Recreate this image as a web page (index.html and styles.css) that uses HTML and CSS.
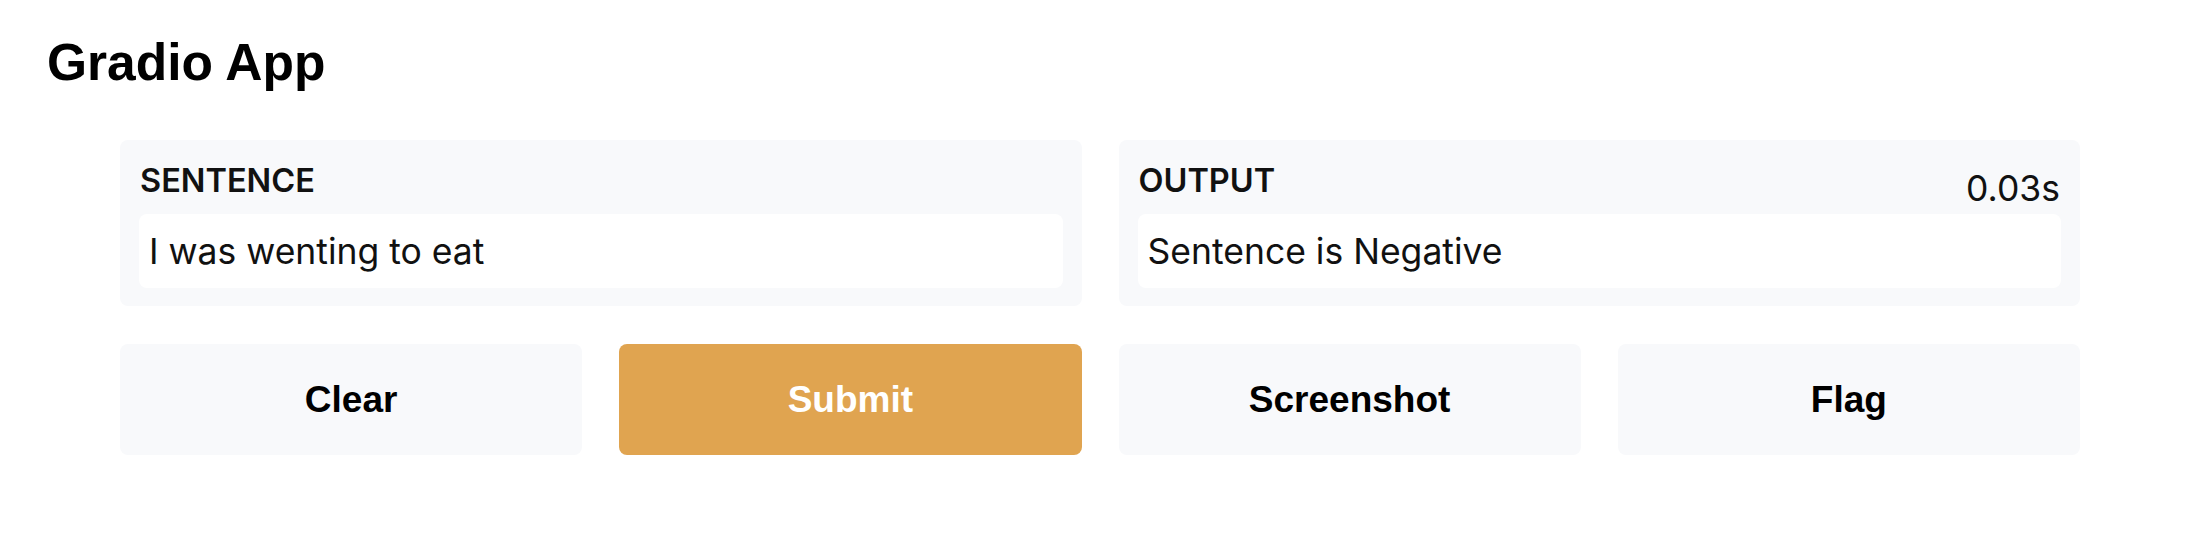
FILE: index.html
```html
<!DOCTYPE html>
<html lang="en">
<head>
<meta charset="utf-8">
<title>Gradio App</title>
<link rel="stylesheet" href="styles.css">
</head>
<body>
<h1 class="title">Gradio App</h1>
<main class="app">
  <section class="panel">
    <div class="label">SENTENCE</div>
    <div class="field">I was wenting to eat</div>
  </section>
  <section class="panel panel-output">
    <div class="label">OUTPUT</div>
    <div class="timer">0.03s</div>
    <div class="field">Sentence is Negative</div>
  </section>
  <button class="btn">Clear</button>
  <button class="btn btn-primary">Submit</button>
  <button class="btn">Screenshot</button>
  <button class="btn">Flag</button>
</main>
</body>
</html>
```

FILE: styles.css
```css
html, body {
  margin: 0;
  padding: 0;
  background: #ffffff;
}

body {
  padding: 32px 0 0 0;
  color: #000;
}

.title {
  margin: 0 0 0 47px;
  font-family: "Liberation Sans", Arial, sans-serif;
  font-weight: 700;
  font-size: 51.5px;
  line-height: 61px;
  color: #000;
}

.app {
  margin: 47px 0 0 120px;
  width: 1960px;
  display: grid;
  grid-template-columns: repeat(4, 1fr);
  grid-template-rows: 166px 111px;
  column-gap: 37px;
  row-gap: 38px;
}

.panel {
  grid-column: span 2;
  position: relative;
  background: #f8f9fb;
  border-radius: 8px;
  padding: 23px 19px 18px 19px;
  display: flex;
  flex-direction: column;
  box-sizing: border-box;
}

.label {
  font-family: Inter, "Noto Sans", sans-serif;
  font-weight: 600;
  font-size: 32.5px;
  line-height: 36px;
  color: #111;
  margin-bottom: 15px;
  padding-left: 1px;
}

.field {
  background: #ffffff;
  border-radius: 8px;
  height: 74px;
  display: flex;
  align-items: center;
  padding-left: 10px;
  font-family: Inter, "Noto Sans", sans-serif;
  font-size: 35.5px;
  color: #111;
}

.timer {
  position: absolute;
  top: 29px;
  right: 20px;
  font-family: Inter, "Noto Sans", sans-serif;
  font-size: 35.5px;
  line-height: 40px;
  color: #111;
}

.btn {
  border: none;
  border-radius: 8px;
  background: #f8f9fb;
  font-family: "Liberation Sans", Arial, sans-serif;
  font-weight: 700;
  font-size: 37px;
  color: #000;
  padding: 0;
  margin: 0;
}

.btn-primary {
  background: #e0a450;
  color: #ffffff;
}
```
